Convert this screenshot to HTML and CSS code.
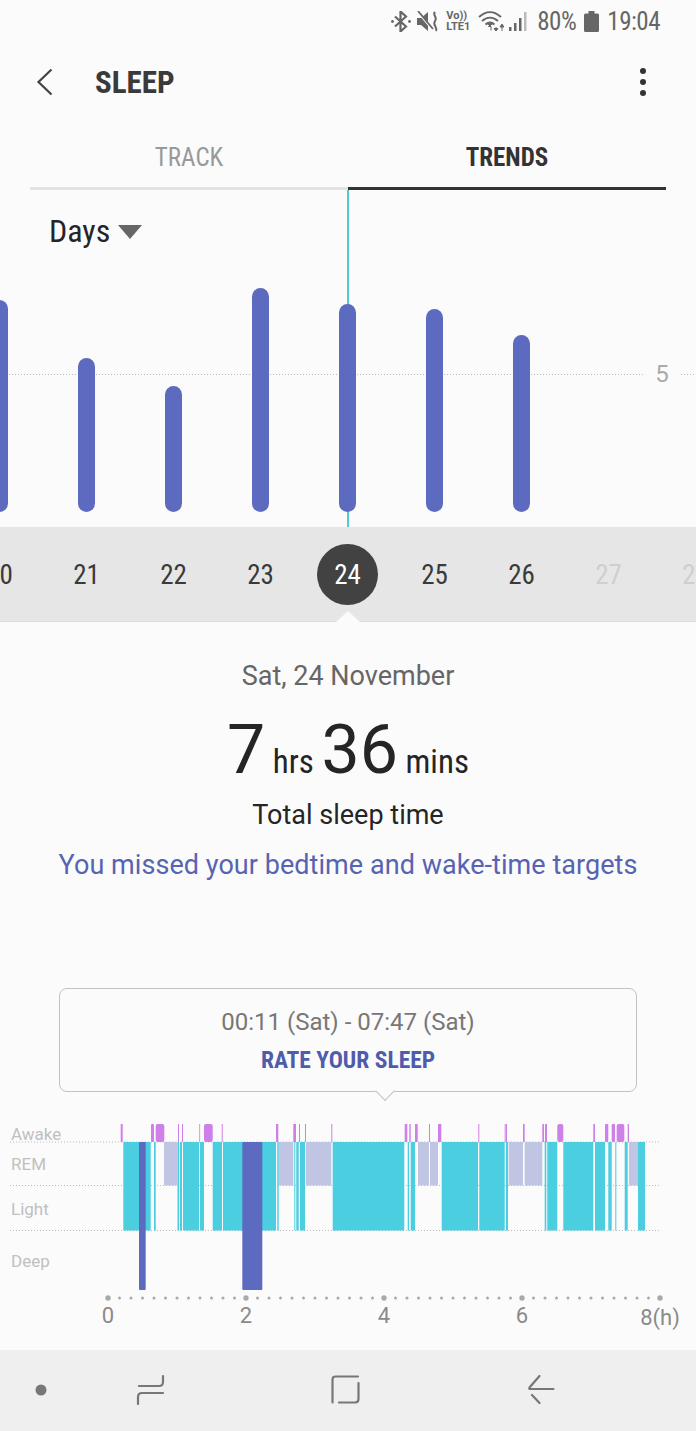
FILE: index.html
```html
<!DOCTYPE html>
<html lang="en">
<head>
    <meta charset="UTF-8">
    <meta name="viewport" content="width=device-width, initial-scale=1.0">
    <title>Sleep</title>
    <link rel="stylesheet" href="styles.css">
</head>
<body>
    <div class="status">
        <svg class="ic-bt" width="20" height="21" viewBox="0 0 20 21"><path d="M4 5.5l11 10-5.5 5V.5l5.500 5-11 10" fill="none" stroke="#666" stroke-width="2.200"/><circle cx="1.500" cy="10.500" r="1.400" fill="#666"/><circle cx="18.500" cy="10.500" r="1.400" fill="#666"/></svg>
        <svg class="ic-mute" width="23" height="21" viewBox="0 0 23 21"><path d="M0 7h4l7-6v19l-7-6H0z" fill="#666"/><path d="M1 1l14 17" stroke="#fbfbfb" stroke-width="2"/><path d="M1 0l15 18" stroke="#666" stroke-width="1.800"/><path d="M18 1c-3 3 3 5 0 9s3 6 1 10" fill="none" stroke="#666" stroke-width="2"/></svg>
        <div class="volte"><span>Vo))</span><span>LTE1</span></div>
        <svg class="ic-wifi" width="26" height="21" viewBox="0 0 26 21"><path d="M1 6c7-6.500 15-6.500 22 0M4 10c5-4.500 11-4.500 16 0M7.500 13.500c3-2.500 6-2.500 9 0" fill="none" stroke="#666" stroke-width="2"/><path d="M12 15l-2-2h4z M13 19.500v-4h-2.500l2.500-3M18 20v-4M18 20l-2-2.500h4zM24 20v-5M24 13l-2 3h4z" fill="#666" stroke="#666" stroke-width="1"/></svg>
        <svg class="ic-signal" width="18" height="20" viewBox="0 0 18 20"><rect x="0" y="16" width="2.500" height="4" fill="#666"/><rect x="5" y="12" width="2.500" height="8" fill="#666"/><rect x="10" y="7" width="2.500" height="13" fill="#666"/><rect x="15" y="1" width="2.500" height="19" fill="#bbb"/></svg>
        <span class="pct">80%</span>
        <svg class="ic-batt" width="15" height="21" viewBox="0 0 15 21"><path d="M4.500 0h6v2.500h3a1.500 1.500 0 0 1 1.500 1.500v15.500a1.500 1.500 0 0 1-1.500 1.500h-12a1.500 1.500 0 0 1-1.500-1.500V4a1.500 1.500 0 0 1 1.500-1.500h3z" fill="#666"/></svg>
        <span class="clock">19:04</span>
    </div>

    <header class="appbar">
        <svg class="back" width="18" height="28" viewBox="0 0 18 28"><path d="M15.500 1.500L2.500 14l13 12.500" fill="none" stroke="#444" stroke-width="2.200"/></svg>
        <h1>SLEEP</h1>
        <div class="more"><i></i><i></i><i></i></div>
    </header>

    <nav class="tabs">
        <div class="tab">TRACK</div>
        <div class="tab active">TRENDS</div>
    </nav>

    <section class="trend">
        <div class="days">Days <span class="caret"></span></div>
        <div class="gridline"></div>
        <div class="five">5</div>
        <div class="cursor"></div>
        <div class="bars">
            <div class="col"><div class="bar" style="height:212px"></div></div>
            <div class="col"><div class="bar" style="height:154px"></div></div>
            <div class="col"><div class="bar" style="height:126px"></div></div>
            <div class="col"><div class="bar" style="height:224px"></div></div>
            <div class="col"><div class="bar" style="height:208px"></div></div>
            <div class="col"><div class="bar" style="height:203px"></div></div>
            <div class="col"><div class="bar" style="height:177px"></div></div>
        </div>
    </section>

    <div class="dates">
        <div class="date">20</div>
        <div class="date">21</div>
        <div class="date">22</div>
        <div class="date">23</div>
        <div class="date"><span class="today">24</span></div>
        <div class="date">25</div>
        <div class="date">26</div>
        <div class="date off">27</div>
        <div class="date off">28</div>
        <div class="notch"></div>
    </div>

    <section class="summary">
        <div class="day">Sat, 24 November</div>
        <div class="total"><b>7</b> hrs <b>36</b> mins</div>
        <div class="label">Total sleep time</div>
        <div class="missed">You missed your bedtime and wake-time targets</div>
    </section>

    <div class="bubble">
        <div class="range">00:11 (Sat) - 07:47 (Sat)</div>
        <div class="rate">RATE YOUR SLEEP</div>
    </div>

    <svg class="stages" width="696" height="230" viewBox="0 1120 696 230">
        <g class="grid">
            <line x1="10" x2="660" y1="1142" y2="1142"/>
            <line x1="10" x2="660" y1="1185.500" y2="1185.500"/>
            <line x1="10" x2="660" y1="1230.500" y2="1230.500"/>
        </g>
        <g class="rem">
            <rect x="164" width="13.300" y="1142" height="43.500"/>
            <rect x="278.700" width="14.600" y="1142" height="43.500"/>
            <rect x="306" width="25.300" y="1142" height="43.500"/>
            <rect x="418" width="11" y="1142" height="43.500"/>
            <rect x="430" width="8" y="1142" height="43.500"/>
            <rect x="508.700" width="14.300" y="1142" height="43.500"/>
            <rect x="524.700" width="17.600" y="1142" height="43.500"/>
            <rect x="629" width="9" y="1142" height="43.500"/>
        </g>
        <g class="light">
            <rect x="123.300" width="27.400" y="1142" height="88.500"/>
            <rect x="154" width="1.700" y="1142" height="88.500"/>
            <rect x="177.500" width="1.500" y="1142" height="88.500"/>
            <rect x="180" width="2" y="1142" height="88.500"/>
            <rect x="183" width="16" y="1142" height="88.500"/>
            <rect x="200" width="4" y="1142" height="88.500"/>
            <rect x="212.700" width="9.300" y="1142" height="88.500"/>
            <rect x="223" width="53" y="1142" height="88.500"/>
            <rect x="277.300" width="1.400" y="1142" height="88.500"/>
            <rect x="294.300" width="1" y="1142" height="88.500"/>
            <rect x="296.300" width="2.400" y="1142" height="88.500"/>
            <rect x="300" width="5" y="1142" height="88.500"/>
            <rect x="332.700" width="71.600" y="1142" height="88.500"/>
            <rect x="407.700" width="1.300" y="1142" height="88.500"/>
            <rect x="410.700" width="4.300" y="1142" height="88.500"/>
            <rect x="441.700" width="36.300" y="1142" height="88.500"/>
            <rect x="479.300" width="25.400" y="1142" height="88.500"/>
            <rect x="506" width="2" y="1142" height="88.500"/>
            <rect x="544.700" width="1.600" y="1142" height="88.500"/>
            <rect x="547.300" width="10" y="1142" height="88.500"/>
            <rect x="563.300" width="30" y="1142" height="88.500"/>
            <rect x="595" width="10" y="1142" height="88.500"/>
            <rect x="608.300" width="3.400" y="1142" height="88.500"/>
            <rect x="615.300" width="1" y="1142" height="88.500"/>
            <rect x="624.700" width="3" y="1142" height="88.500"/>
            <rect x="638" width="7" y="1142" height="88.500"/>
        </g>
        <g class="deep">
            <rect x="139" width="6.700" y="1142" height="148" rx="1"/>
            <rect x="242.300" width="20" y="1142" height="148" rx="1"/>
        </g>
        <g class="awake">
            <rect x="120.700" width="2" y="1124" height="18"/>
            <rect x="151" width="3" y="1124" height="18" rx="1"/>
            <rect x="155.700" width="8.600" y="1124" height="18" rx="2"/>
            <rect x="178" width="1" y="1124" height="18"/>
            <rect x="182" width="1" y="1124" height="18"/>
            <rect x="199.300" width="0.800" y="1124" height="18"/>
            <rect x="204" width="8.700" y="1124" height="18" rx="2"/>
            <rect x="221.700" width="1" y="1124" height="18"/>
            <rect x="276" width="2.300" y="1124" height="18"/>
            <rect x="293.300" width="2.700" y="1124" height="18"/>
            <rect x="299" width="1" y="1124" height="18"/>
            <rect x="305" width="1" y="1124" height="18"/>
            <rect x="331.300" width="1" y="1124" height="18"/>
            <rect x="404.700" width="2.600" y="1124" height="18"/>
            <rect x="409.300" width="1.400" y="1124" height="18"/>
            <rect x="415" width="2.700" y="1124" height="18"/>
            <rect x="429" width="1" y="1124" height="18"/>
            <rect x="438" width="3.300" y="1124" height="18"/>
            <rect x="478.300" width="1" y="1124" height="18"/>
            <rect x="504.700" width="1" y="1124" height="18"/>
            <rect x="506" width="1" y="1124" height="18"/>
            <rect x="523" width="1.700" y="1124" height="18"/>
            <rect x="542.300" width="1.700" y="1124" height="18"/>
            <rect x="545" width="2" y="1124" height="18"/>
            <rect x="557.300" width="6" y="1124" height="18" rx="2"/>
            <rect x="593.300" width="1.700" y="1124" height="18"/>
            <rect x="605" width="3.300" y="1124" height="18" rx="1"/>
            <rect x="611.700" width="3.300" y="1124" height="18" rx="1"/>
            <rect x="616.700" width="7.600" y="1124" height="18" rx="2"/>
            <rect x="627.700" width="1.300" y="1124" height="18"/>
        </g>
        <line class="ticks" x1="108" x2="660" y1="1298" y2="1298"/>
        <g class="major">
            <circle cx="108" cy="1298" r="2.700"/>
            <circle cx="246" cy="1298" r="2.700"/>
            <circle cx="384" cy="1298" r="2.700"/>
            <circle cx="522" cy="1298" r="2.700"/>
            <circle cx="660" cy="1298" r="2.700"/>
        </g>
        <g class="rows">
            <text x="11" y="1139.500">Awake</text>
            <text x="11" y="1170">REM</text>
            <text x="11" y="1214.500">Light</text>
            <text x="11" y="1267">Deep</text>
        </g>
        <g class="hours">
            <text x="108" y="1323">0</text>
            <text x="246" y="1323">2</text>
            <text x="384" y="1323">4</text>
            <text x="522" y="1323">6</text>
            <text x="660" y="1325">8(h)</text>
        </g>
    </svg>

    <footer class="navbar">
        <svg width="696" height="81" viewBox="0 1350 696 81">
            <ellipse cx="41" cy="1390" rx="5.500" ry="5.500" fill="#777"/>
            <g fill="none" stroke="#777" stroke-width="2.200" stroke-linecap="round">
                <path d="M139 1386h20q4 0 4-4v-6"/>
                <path d="M163 1393h-21q-4 0-4 4v7"/>
                <path d="M332.500 1402.500v-23q0-3 3-3h22.500"/>
                <path d="M358.500 1383v16q0 3.500-3.500 3.500h-16"/>
                <path d="M539.500 1376l-10 11.500q-1 1.500 1 1.500h23"/>
                <path d="M532 1395l7.500 8"/>
            </g>
        </svg>
    </footer>
</body>
</html>
```

FILE: styles.css
```css
* {
    box-sizing: border-box;
}

body {
    margin: 0;
    width: 696px;
    height: 1431px;
    overflow: hidden;
    background-color: #fbfbfb;
    color: #252525;
    font-family: Roboto, sans-serif;
}

.status {
    height: 44px;
    padding: 9px 36px 0 0;
    display: flex;
    justify-content: flex-end;
    align-items: flex-start;
    color: #666;
}

.status svg {
    display: block;
    margin-top: 2px;
}

.ic-mute {
    margin-left: 6px;
}

.volte {
    width: 24px;
    margin: 1px 0 0 6px;
    font-size: 11px;
    font-weight: 700;
    line-height: 11px;
    display: flex;
    flex-direction: column;
}

.ic-wifi {
    margin-left: 8px;
}

.ic-signal {
    margin-left: 5px;
}

.pct,
.clock {
    font-size: 25px;
    line-height: 26px;
    font-stretch: 75%;
    letter-spacing: -0.5px;
}

.pct {
    margin-left: 10px;
}

.ic-batt {
    margin-left: 8px;
}

.clock {
    margin-left: 8px;
}

.appbar {
    height: 76px;
    padding: 0 50px 0 36px;
    display: flex;
    align-items: center;
}

.appbar h1 {
    margin: 0 0 0 41px;
    font-size: 31px;
    font-weight: 700;
    font-stretch: 75%;
    color: #3a3a3a;
}

.more {
    margin-left: auto;
    display: flex;
    flex-direction: column;
    gap: 5px;
}

.more i {
    width: 6px;
    height: 6px;
    border-radius: 50%;
    background-color: #333;
}

.tabs {
    height: 70px;
    padding: 0 30px;
    display: flex;
}

.tab {
    flex: 1;
    height: 70px;
    padding-top: 23px;
    text-align: center;
    font-size: 25px;
    font-stretch: 75%;
    color: #999;
    border-bottom: 3px solid #e3e3e3;
}

.tab.active {
    color: #333;
    font-weight: 700;
    border-bottom-color: #333;
}

.trend {
    position: relative;
    height: 337px;
}

.days {
    padding: 22px 0 0 49px;
    display: flex;
    align-items: center;
    gap: 8px;
    font-size: 32px;
    line-height: 38px;
    font-stretch: 75%;
}

.caret {
    margin-top: 2px;
    border-left: 12px solid transparent;
    border-right: 12px solid transparent;
    border-top: 14px solid #666;
}

.gridline {
    position: absolute;
    left: 0;
    right: 0;
    top: 184px;
    height: 1px;
    background-image: repeating-linear-gradient(to right, #bbb 0 1px, transparent 1px 3px);
}

.five {
    position: absolute;
    left: 643px;
    top: 169px;
    width: 38px;
    text-align: center;
    background-color: #fbfbfb;
    font-size: 24px;
    line-height: 30px;
    color: #aaa;
}

.cursor {
    position: absolute;
    left: 347px;
    top: 0;
    bottom: 0;
    border-left: 2px solid #56c8cf;
}

.bars {
    position: absolute;
    left: -44px;
    bottom: 15px;
    display: flex;
    align-items: flex-end;
}

.col {
    width: 87px;
    display: flex;
    justify-content: center;
}

.bar {
    width: 17px;
    border-radius: 9px;
    background-color: #5c6bc0;
}

.dates {
    position: relative;
    height: 95px;
    margin-left: -44px;
    width: 800px;
    display: flex;
    align-items: center;
    background-color: #e6e6e6;
    border-bottom: 1px solid #dcdcdc;
}

.date {
    width: 87px;
    flex: none;
    padding-top: 2px;
    text-align: center;
    font-size: 27px;
    font-stretch: 75%;
    color: #3a3a3a;
}

.date.off {
    color: #cfcfcf;
}

.today {
    width: 61px;
    height: 61px;
    margin: -2px auto 0;
    padding-top: 2px;
    display: flex;
    align-items: center;
    justify-content: center;
    border-radius: 50%;
    background-color: #424242;
    color: #fff;
}

.notch {
    position: absolute;
    left: 380px;
    bottom: -1px;
    border-left: 12px solid transparent;
    border-right: 12px solid transparent;
    border-bottom: 11px solid #fbfbfb;
}

.summary {
    height: 366px;
    padding-top: 36px;
    text-align: center;
}

.day {
    font-size: 27px;
    line-height: 36px;
    color: #666;
}

.total {
    margin-top: 18px;
    font-size: 33px;
    font-stretch: 87%;
    line-height: 76px;
    color: #252525;
}

.total b {
    font-size: 68px;
    font-weight: 400;
    font-stretch: 100%;
}

.label {
    margin-top: -3px;
    font-size: 27px;
    line-height: 36px;
}

.missed {
    margin-top: 14px;
    font-size: 27px;
    line-height: 36px;
    letter-spacing: 0.05px;
    color: #5763b3;
}

.bubble {
    position: relative;
    z-index: 1;
    height: 104px;
    margin: 0 59px;
    padding-top: 17px;
    text-align: center;
    border: 1.500px solid #c2c2c2;
    border-radius: 8px;
    background-color: #fbfbfb;
}

.bubble::after {
    content: "";
    position: absolute;
    left: 318px;
    bottom: -7px;
    width: 13px;
    height: 13px;
    background-color: #fbfbfb;
    border-right: 1.500px solid #c2c2c2;
    border-bottom: 1.500px solid #c2c2c2;
    transform: rotate(45deg);
}

.range {
    font-size: 24px;
    line-height: 32px;
    color: #777;
}

.rate {
    margin-top: 7px;
    font-size: 23.500px;
    line-height: 30px;
    font-weight: 700;
    font-stretch: 75%;
    color: #4f5cac;
}

.stages {
    display: block;
    margin-top: 28px;
    height: 230px;
}

.grid line {
    stroke: #bbb;
    stroke-width: 1;
    stroke-dasharray: 1 2;
}

.rem {
    fill: #c0c5e4;
}

.light {
    fill: #4bcee0;
}

.deep {
    fill: #5c6bc0;
}

.awake {
    fill: #cf7fe8;
}

.ticks {
    stroke: #aaa;
    stroke-width: 3;
    stroke-linecap: round;
    stroke-dasharray: 0 11.500;
}

.major {
    fill: #aaa;
}

.rows text {
    font-family: Roboto, sans-serif;
    font-size: 17px;
    fill: #c0c0c0;
}

.hours text {
    font-family: Roboto, sans-serif;
    font-size: 22px;
    fill: #8a8a8a;
    text-anchor: middle;
}

.navbar {
    height: 81px;
    background-color: #efefef;
}

.navbar svg {
    display: block;
}
```
